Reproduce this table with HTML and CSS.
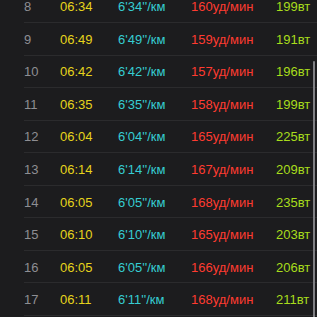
FILE: index.html
```html
<!DOCTYPE html>
<html>
<head>
<meta charset="utf-8">
<link rel="stylesheet" href="styles.css">
</head>
<body>
<div class="list">
  <div class="row"><span class="n">8</span><span class="t">06:34</span><span class="p">6'34''/км</span><span class="h">160уд/мин</span><span class="w">199вт</span></div>
  <div class="row"><span class="n">9</span><span class="t">06:49</span><span class="p">6'49''/км</span><span class="h">159уд/мин</span><span class="w">191вт</span></div>
  <div class="row"><span class="n">10</span><span class="t">06:42</span><span class="p">6'42''/км</span><span class="h">157уд/мин</span><span class="w">196вт</span></div>
  <div class="row"><span class="n">11</span><span class="t">06:35</span><span class="p">6'35''/км</span><span class="h">158уд/мин</span><span class="w">199вт</span></div>
  <div class="row"><span class="n">12</span><span class="t">06:04</span><span class="p">6'04''/км</span><span class="h">165уд/мин</span><span class="w">225вт</span></div>
  <div class="row"><span class="n">13</span><span class="t">06:14</span><span class="p">6'14''/км</span><span class="h">167уд/мин</span><span class="w">209вт</span></div>
  <div class="row"><span class="n">14</span><span class="t">06:05</span><span class="p">6'05''/км</span><span class="h">168уд/мин</span><span class="w">235вт</span></div>
  <div class="row"><span class="n">15</span><span class="t">06:10</span><span class="p">6'10''/км</span><span class="h">165уд/мин</span><span class="w">203вт</span></div>
  <div class="row"><span class="n">16</span><span class="t">06:05</span><span class="p">6'05''/км</span><span class="h">166уд/мин</span><span class="w">206вт</span></div>
  <div class="row"><span class="n">17</span><span class="t">06:11</span><span class="p">6'11''/км</span><span class="h">168уд/мин</span><span class="w">211вт</span></div>
</div>
<div class="scrollbar"></div>
</body>
</html>
```
FILE: styles.css
```css
html, body {
  margin: 0;
  padding: 0;
  background: #1c1c1e;
  overflow: hidden;
  height: 317px;
}
body {
  font-family: "Liberation Sans", Arial, sans-serif;
  font-size: 13px;
  position: relative;
}
.list {
  margin-top: -10.56px;
  margin-left: 24px;
  border-top: 1px solid #2b2b2d;
}
.row {
  box-sizing: border-box;
  height: 32.56px;
  border-bottom: 1px solid #2b2b2d;
  display: flex;
  align-items: center;
  padding-top: 1px;
}
.n { width: 36px; color: #8e8e93; }
.t { width: 58px; color: #e6d41c; }
.p { width: 73px; color: #36cdd2; }
.h { width: 85px; color: #ff3b30; }
.w { color: #a8dc1c; }
.scrollbar {
  position: absolute;
  right: 2px;
  top: 61px;
  width: 2.5px;
  height: 270px;
  border-radius: 2px;
  background: #808084;
}
```
